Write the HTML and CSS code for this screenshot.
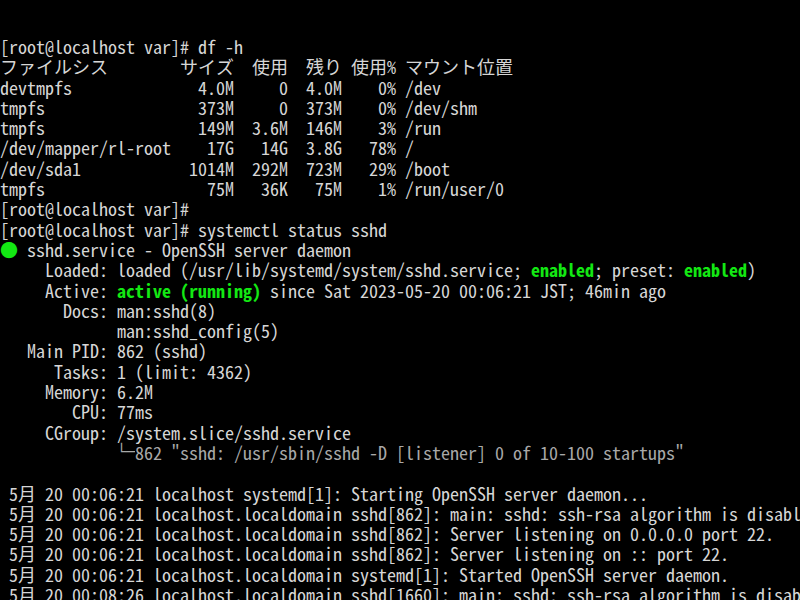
FILE: index.html
```html
<!DOCTYPE html>
<html lang="ja">
<head>
<meta charset="utf-8">
<title>terminal</title>
<link rel="stylesheet" href="styles.css">
</head>
<body>
<pre class="term">[root@localhost var]# df -h
ファイルシス        サイズ  使用  残り 使用% マウント位置
devtmpfs              4.0M     0  4.0M    0% /dev
tmpfs                 373M     0  373M    0% /dev/shm
tmpfs                 149M  3.6M  146M    3% /run
/dev/mapper/rl-root    17G   14G  3.8G   78% /
/dev/sda1            1014M  292M  723M   29% /boot
tmpfs                  75M   36K   75M    1% /run/user/0
[root@localhost var]#
[root@localhost var]# systemctl status sshd
<span class="dot">●</span> sshd.service - OpenSSH server daemon
     Loaded: loaded (/usr/lib/systemd/system/sshd.service; <span class="g">enabled</span>; preset: <span class="g">enabled</span>)
     Active: <span class="g">active (running)</span> since Sat 2023-05-20 00:06:21 JST; 46min ago
       Docs: man:sshd(8)
             man:sshd_config(5)
   Main PID: 862 (sshd)
      Tasks: 1 (limit: 4362)
     Memory: 6.2M
        CPU: 77ms
     CGroup: /system.slice/sshd.service
             <span class="dim"><span class="box">└─</span>862 "sshd: /usr/sbin/sshd -D [listener] 0 of 10-100 startups"</span>

 5月 20 00:06:21 localhost systemd[1]: Starting OpenSSH server daemon...
 5月 20 00:06:21 localhost.localdomain sshd[862]: main: sshd: ssh-rsa algorithm is disabled
 5月 20 00:06:21 localhost.localdomain sshd[862]: Server listening on 0.0.0.0 port 22.
 5月 20 00:06:21 localhost.localdomain sshd[862]: Server listening on :: port 22.
 5月 20 00:06:21 localhost.localdomain systemd[1]: Started OpenSSH server daemon.
 5月 20 00:08:26 localhost.localdomain sshd[1660]: main: sshd: ssh-rsa algorithm is disabled</pre>
</body>
</html>
```
FILE: styles.css
```css
html, body {
  margin: 0;
  padding: 0;
  background: #000;
  width: 800px;
  height: 600px;
  overflow: hidden;
}
.term {
  margin: 0;
  padding: 36px 0 0 0;
  font-family: "Noto Sans Mono CJK JP", "Noto Sans CJK JP", monospace;
  font-size: 18px;
  line-height: 20.3px;
  color: #d6d6d6;
  white-space: pre;
  overflow: hidden;
}
.g {
  color: #13e813;
  font-weight: bold;
}
.dot {
  color: #13e813;
}
.dim {
  color: #a8a8a8;
}
.box {
  display: inline-block;
  width: 18px;
  overflow: hidden;
  font-family: "DejaVu Sans Mono", monospace;
  font-size: 15px;
  letter-spacing: 0;
  vertical-align: bottom;
  line-height: 20.3px;
}
```
